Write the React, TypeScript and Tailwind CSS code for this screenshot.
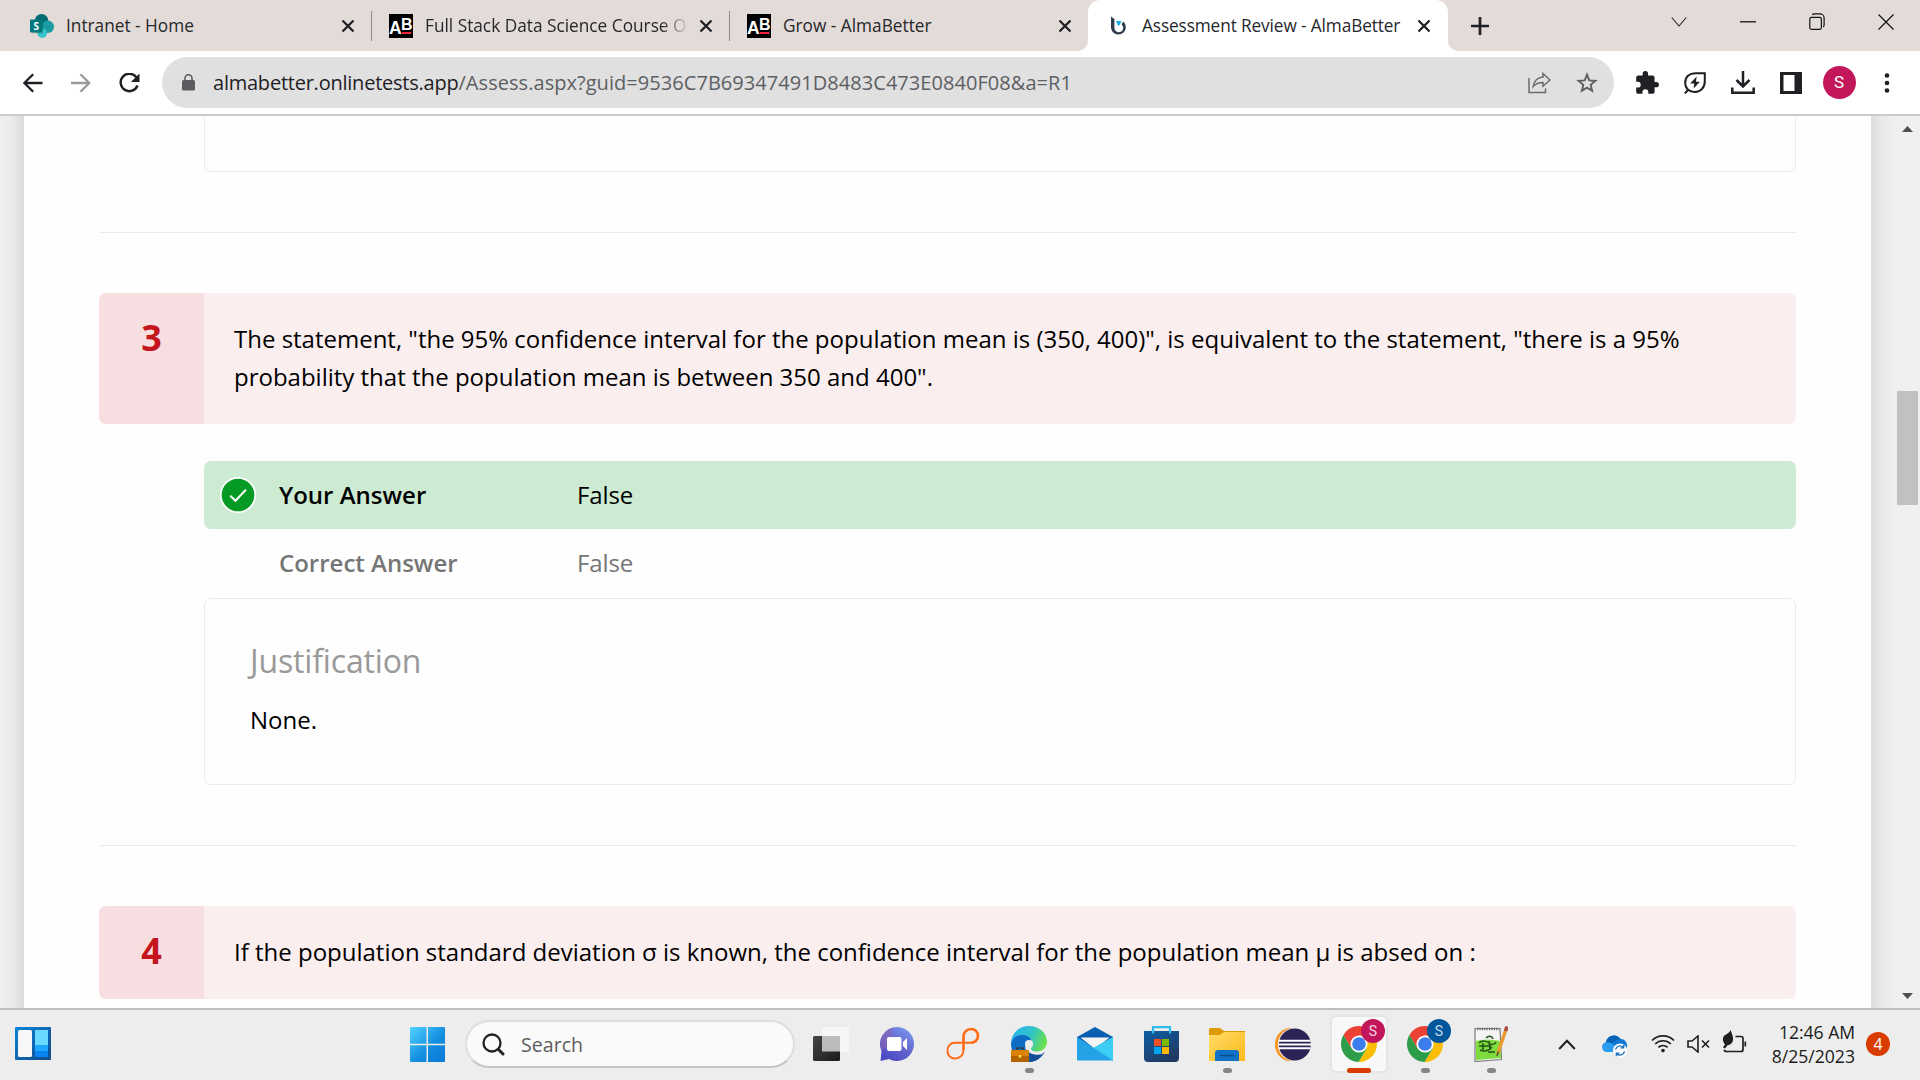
import React from 'react';

type Kids = { children?: React.ReactNode };

/* ---------- Browser tab strip ---------- */

function CloseX() {
  return (
    <svg width="14" height="14" viewBox="0 0 14 14" className="shrink-0">
      <path d="M1.5 1.5 12.5 12.5M12.5 1.5 1.5 12.5" stroke="#1f2024" strokeWidth="2.3" fill="none" />
    </svg>
  );
}

function SharePointIcon() {
  return (
    <svg width="24" height="24" viewBox="0 0 24 24">
      <circle cx="11.5" cy="6.8" r="6.8" fill="#036c70" />
      <circle cx="17.8" cy="12.8" r="6.2" fill="#1a9ba1" />
      <circle cx="12.2" cy="19.2" r="4.8" fill="#37c6d0" />
      <rect x="2" y="6.4" width="11" height="13" fill="#000" opacity=".18" />
      <rect x="0" y="5.5" width="12.4" height="13" rx="1" fill="#03787c" />
      <text x="6.2" y="15.6" textAnchor="middle" fontFamily="Open Sans" fontWeight="700" fontSize="10" fill="#fff">S</text>
    </svg>
  );
}

function ABIcon() {
  return (
    <svg width="24" height="24" viewBox="0 0 24 24">
      <rect width="24" height="24" fill="#000" />
      <text x="0" y="20" fontFamily="Liberation Sans" fontWeight="700" fontSize="17.5" fill="#fff">A</text>
      <text x="12" y="16" fontFamily="Liberation Sans" fontWeight="700" fontSize="16" fill="#fff">B</text>
      <rect x="12.8" y="18" width="9.5" height="2" fill="#f0263c" />
    </svg>
  );
}

function BIcon() {
  return (
    <svg width="18" height="20" viewBox="0 0 18 20">
      <path d="M1 0.5 4.4 3v8.6a4.4 4.4 0 1 0 7.2-3.2l1.6-2.8A7.4 7.4 0 1 1 1 11.6z" fill="#2f3e4e" />
      <path d="M6 5h5.5L9.4 9.6H8z" fill="#17aee8" />
    </svg>
  );
}

function TabTitle({ children }: Kids) {
  return <span className="whitespace-nowrap text-[17.25px] leading-6 text-[#26272b]">{children}</span>;
}

function TabStrip() {
  return (
    <div className="flex h-[51px] bg-[#e3dbd8]">
      <div className="flex w-[372px] items-center pl-[30px]">
        <SharePointIcon />
        <div className="ml-3 w-[275px]"><TabTitle>Intranet - Home</TabTitle></div>
        <CloseX />
        <div className="ml-auto h-[30px] w-px bg-[#8f8b8a]" />
      </div>
      <div className="flex w-[358px] items-center pl-[17px]">
        <ABIcon />
        <div className="ml-3 w-[262px] [mask-image:linear-gradient(to_right,#000_236px,transparent_264px)]">
          <TabTitle>Full Stack Data Science Course O</TabTitle>
        </div>
        <div className="ml-[12px] flex"><CloseX /></div>
        <div className="ml-auto h-[30px] w-px bg-[#8f8b8a]" />
      </div>
      <div className="flex w-[358px] items-center pl-[17px]">
        <ABIcon />
        <div className="ml-3 w-[275px]"><TabTitle>Grow - AlmaBetter</TabTitle></div>
        <CloseX />
      </div>
      <div className="relative flex w-[360px] items-center rounded-t-[12px] bg-white pl-[22px]">
        <svg className="absolute -left-[10px] bottom-0" width="10" height="10" viewBox="0 0 10 10"><path d="M10 0v10H0A10 10 0 0 0 10 0z" fill="#fff" /></svg>
        <svg className="absolute -right-[10px] bottom-0" width="10" height="10" viewBox="0 0 10 10"><path d="M0 0v10h10A10 10 0 0 1 0 0z" fill="#fff" /></svg>
        <BIcon />
        <div className="ml-[14px] w-[275px] tracking-[-0.12px]"><TabTitle>Assessment Review - AlmaBetter</TabTitle></div>
        <CloseX />
      </div>
      <div className="flex w-[64px] items-center justify-center">
        <svg width="18" height="18" viewBox="0 0 18 18"><path d="M9 0v18M0 9h18" stroke="#1f2024" strokeWidth="2.7" /></svg>
      </div>
      <div className="ml-auto flex h-[43px] items-center">
        <div className="flex w-[69px] justify-center"><svg width="16" height="10" viewBox="0 0 16 10"><path d="M.7.5 8 9 15.3.5" fill="none" stroke="#222" strokeWidth="1.1" /></svg></div>
        <div className="flex w-[69px] justify-center"><svg width="16" height="2" viewBox="0 0 16 2"><path d="M0 .8h16" stroke="#111" strokeWidth="1.3" /></svg></div>
        <div className="flex w-[69px] justify-center">
          <svg width="16" height="18" viewBox="0 0 16 18" fill="none" stroke="#111" strokeWidth="1.2">
            <rect x=".8" y="4.400" width="11.6" height="12" rx="1.8" />
            <path d="M3.4 1.900c.4-.7 1-1 2-1h5.700a4 4 0 0 1 4 4v7c0 1-.4 1.700-1 2" />
          </svg>
        </div>
        <div className="flex w-[69px] justify-center"><svg width="16" height="16" viewBox="0 0 16 16"><path d="M.5.5l15 15M15.500.5l-15 15" stroke="#111" strokeWidth="1.2" /></svg></div>
      </div>
    </div>
  );
}

/* ---------- Address bar ---------- */

function Slot({ children }: Kids) {
  return <div className="flex w-12 shrink-0 items-center justify-center">{children}</div>;
}

function Toolbar() {
  return (
    <div className="flex h-[65px] items-center border-b-2 border-[#cbcbcb] bg-white pl-[9px]">
      <Slot>
        <svg width="20" height="20" viewBox="0 0 20 20" fill="none" stroke="#1f2024" strokeWidth="2.3"><path d="M19.500 10H1.500M10.200 1.200 1.400 10l8.800 8.800" /></svg>
      </Slot>
      <Slot>
        <svg width="20" height="20" viewBox="0 0 20 20" fill="none" stroke="#9b9b9c" strokeWidth="2.300"><path d="M0 10h18.200M9.500 1.200 18.300 10l-8.800 8.800" /></svg>
      </Slot>
      <Slot>
        <svg width="22" height="20" viewBox="0 0 22 20">
          <path d="M18.300 4.200A8.700 8.700 0 1 0 19.500 12.500" fill="none" stroke="#1f2024" strokeWidth="2.400" />
          <path d="M21.500.5v8.600h-8.600z" fill="#1f2024" />
        </svg>
      </Slot>
      <div className="ml-[9px] flex h-[51px] w-[1452px] items-center rounded-full bg-[#e0e0e0] pr-[3px] pl-[20px]">
        <svg width="13" height="17" viewBox="0 0 13 17">
          <rect y="6" width="13" height="10.500" rx="1.500" fill="#5a5c60" />
          <path d="M3 7V4.300a3.500 3.500 0 0 1 7 0V7" fill="none" stroke="#5a5c60" strokeWidth="1.600" />
        </svg>
        <div className="ml-[18px] whitespace-nowrap text-[20px] leading-7 text-[#5d5f63]">
          <span className="tracking-[-0.23px] text-[#1f2024]">almabetter.onlinetests.app</span>
          <span className="tracking-[0.05px]">/Assess.aspx?guid=9536C7B69347491D8483C473E0840F08&amp;a=R1</span>
        </div>
        <div className="ml-auto flex">
          <Slot>
            <svg width="24" height="22" viewBox="0 0 24 22" fill="none" stroke="#6a6b6e" strokeWidth="1.500">
              <path d="M2 6v14.500h16.500V16.500" />
              <path d="M16 1.500 23 8l-7 6.200v-3.600c-4 0-7.200 1-9.800 4C7 9 10.500 5.600 16 5.100z" />
            </svg>
          </Slot>
          <Slot>
            <svg width="22" height="22" viewBox="0 0 22 22" fill="none" stroke="#5d5f63" strokeWidth="1.900">
              <path d="M11 2.700l2.250 5.700 6.150.45-4.700 4 1.450 6L11 15.700l-5.150 3.150 1.450-6-4.700-4 6.150-.45z" />
            </svg>
          </Slot>
        </div>
      </div>
      <div className="ml-[9px] flex">
        <Slot>
          <svg width="26" height="26" viewBox="0 0 24 24" fill="#1f2024">
            <path d="M20.500 11H19V7c0-1.100-.9-2-2-2h-4V3.500a2.500 2.500 0 0 0-5 0V5H4c-1.100 0-2 .9-2 2v3.800h1.500a2.700 2.700 0 0 1 0 5.400H2V20c0 1.100.9 2 2 2h3.800v-1.500a2.700 2.700 0 0 1 5.400 0V22H17c1.100 0 2-.9 2-2v-4h1.500a2.500 2.500 0 0 0 0-5z" />
          </svg>
        </Slot>
        <Slot>
          <svg width="22" height="22" viewBox="0 0 22 22" fill="none" stroke="#1f2024">
            <path d="M20.800 1.200H12C5 1.200 1.200 5 1.200 11c0 5.500 4 9 9 9 6 0 10.600-4 10.600-10.500z" strokeWidth="2" />
            <path d="M4.500 17.500.8 21.500" strokeWidth="2" />
            <path d="M12.600 4.600 6.200 11.500h4L9.600 16.600 16 9.700h-4z" fill="#1f2024" stroke="none" />
          </svg>
        </Slot>
        <Slot>
          <svg width="24" height="24" viewBox="0 0 24 24" fill="none" stroke="#1f2024" strokeWidth="2.500">
            <path d="M12 0v15M5.500 9l6.500 6.500L18.500 9M1.300 16.500v5.200h21.400v-5.200" />
          </svg>
        </Slot>
        <Slot>
          <svg width="22" height="22" viewBox="0 0 22 22"><path fillRule="evenodd" d="M0 0h22v22H0zM3.500 3v16h11V3z" fill="#1f2024" /></svg>
        </Slot>
        <Slot>
          <div className="flex size-[33px] items-center justify-center rounded-full bg-[#c2185b] font-['Roboto'] text-[17px] text-white">S</div>
        </Slot>
        <Slot>
          <svg width="6" height="20" viewBox="0 0 6 20" fill="#1f2024"><circle cx="3" cy="2.500" r="2.300" /><circle cx="3" cy="10" r="2.300" /><circle cx="3" cy="17.500" r="2.300" /></svg>
        </Slot>
      </div>
    </div>
  );
}

/* ---------- Page ---------- */

function Question({ n, children }: Kids & { n: number }) {
  return (
    <div className="flex overflow-hidden rounded-[7px] bg-[#faeeee]">
      <div className="w-[105px] shrink-0 bg-[#f6dee1] pt-[26px] text-center text-[36px] leading-[38px] font-bold text-[#c4161c]">{n}</div>
      <div className="pt-[27px] pb-7 pl-[30px] text-[24px] leading-[38px] tracking-[-0.005px] text-black">{children}</div>
    </div>
  );
}

function Review() {
  return (
    <div className="flex h-[892px] overflow-hidden bg-[#f0f0f0]">
      <div className="w-6 shrink-0 bg-gradient-to-r from-[#efefef] via-[#eaeaea] to-[#dcdcdc]" />
      <div className="w-[1847px] shrink-0 bg-[#fefefe] pr-[75px] pl-[75px]">
        <div className="ml-[105px] h-[56px] rounded-b-[7px] border border-t-0 border-[#ebebeb]" />
        <div className="mt-[60px] h-px bg-[#ebebeb]" />
        <div className="mt-[60px] h-[131px]">
          <Question n={3}>
            The statement, "the 95% confidence interval for the population mean is (350, 400)", is equivalent to the statement, "there is a 95%
            <br />
            probability that the population mean is between 350 and 400".
          </Question>
        </div>
        <div className="mt-[37px] ml-[105px]">
          <div className="flex h-[68px] items-center rounded-[7px] bg-[#cdebd3] pl-[16px] text-[24px] leading-[38px] text-black">
            <svg width="36" height="36" viewBox="0 0 37 37" className="mb-px">
              <circle cx="18.500" cy="18.500" r="18.500" fill="#fff" />
              <circle cx="18.500" cy="18.500" r="16.800" fill="#049a24" />
              <path d="M10.500 19.200 15.900 24.400 26.700 13" fill="none" stroke="#fff" strokeWidth="2.100" />
            </svg>
            <div className="ml-[23px] w-[298px] font-semibold">Your Answer</div>
            <div className="tracking-[-0.1px]">False</div>
          </div>
          <div className="flex h-[69px] items-center pb-px pl-[75px] text-[24px] leading-[38px] text-[#757575]">
            <div className="w-[298px] font-semibold">Correct Answer</div>
            <div className="tracking-[-0.1px]">False</div>
          </div>
          <div className="h-[187px] rounded-[7px] border border-[#ebebeb] px-[45px] pt-[40px]">
            <div className="text-[32px] leading-[44px] tracking-[-0.15px] text-[#999999]">Justification</div>
            <div className="mt-[18px] text-[24px] leading-[38px] text-black">None.</div>
          </div>
        </div>
        <div className="mt-[60px] h-px bg-[#ebebeb]" />
        <div className="mt-[60px]">
          <Question n={4}>
            If the population standard deviation σ is known, the confidence interval for the population mean μ is absed on :
          </Question>
        </div>
      </div>
      <div className="w-6 shrink-0 bg-gradient-to-r from-[#dedede] via-[#eaeaea] to-[#efefef]" />
      <div className="flex w-[25px] flex-col items-center bg-[#f0f0f0]">
        <svg className="mt-[10px] ml-[-1px]" width="11" height="6" viewBox="0 0 11 6"><path d="M0 6 5.500 0 11 6z" fill="#505050" /></svg>
        <div className="mt-[259px] ml-[-1px] h-[114px] w-[21px] bg-[#c1c1c1]" />
        <svg className="mt-auto mb-[9px] ml-[-1px]" width="11" height="6" viewBox="0 0 11 6"><path d="M0 0h11L5.500 6z" fill="#505050" /></svg>
      </div>
    </div>
  );
}

/* ---------- Taskbar ---------- */

function TaskApp({ children, dot }: Kids & { dot?: boolean }) {
  return (
    <div className="relative flex h-full w-[66px] items-center justify-center">
      {children}
      {dot && <div className="absolute bottom-[6px] h-[5px] w-[9px] rounded-full bg-[#868686]" />}
    </div>
  );
}

function ChromeLogo({ badge, ink }: { badge: string; ink: string }) {
  return (
    <svg width="44" height="48" viewBox="0 0 44 48" className="shrink-0 overflow-visible">
      <path d="M22 15.500h15.800A18 18 0 0 1 21.500 42L29.800 28.500z" fill="#fbbc04" />
      <path d="M6.400 15 14.400 28.400 22 15.500H37.900A18 18 0 0 0 6.400 15z" fill="#ea4335" />
      <path d="M6.400 15A18 18 0 0 0 21.500 42l8.300-13.700H14.400z" fill="#2d9d4a" />
      <circle cx="22" cy="24" r="8.600" fill="#fff" />
      <circle cx="22" cy="24" r="6.800" fill="#3b7ded" />
      <circle cx="36" cy="11" r="12" fill={badge} />
      <text x="36" y="16" textAnchor="middle" fontFamily="Roboto" fontSize="14" fill={ink}>S</text>
    </svg>
  );
}

function Taskbar() {
  return (
    <div className="flex h-[72px] items-center border-t-2 border-[#bdbdbd] bg-[#ededed] pl-[15px]">
      <svg width="36" height="33" viewBox="0 0 36 33" className="mb-1">
        <defs>
          <linearGradient id="wg" x1="0" y1="0" x2="1" y2="1"><stop stopColor="#0a86d8" /><stop offset="1" stopColor="#124a8c" /></linearGradient>
        </defs>
        <rect width="36" height="33" rx="1" fill="url(#wg)" />
        <rect x="3" y="3" width="14" height="27" rx="1.500" fill="#f7f7f7" />
        <path d="M20 3h13v15H20z" fill="#69d9ff" />
        <path d="M20 18h13v6H20z" fill="#1fa7ff" />
        <path d="M20 24h13v6H20z" fill="#0a84ee" />
      </svg>
      <svg width="35" height="35" viewBox="0 0 35 35" className="mb-0.5 ml-[359px]">
        <defs>
          <linearGradient id="win" x1="0" y1="0" x2="1" y2="1"><stop stopColor="#51d3ff" /><stop offset=".55" stopColor="#1590e0" /><stop offset="1" stopColor="#0577d4" /></linearGradient>
        </defs>
        <path d="M1 0h15.500v16.700H0V1zM18 0h16a1 1 0 0 1 1 1v15.700H18zM0 18.300h16.500V35H1a1 1 0 0 1-1-1zM18 18.300h17V34a1 1 0 0 1-1 1H18z" fill="url(#win)" />
      </svg>
      <div className="mb-0.5 ml-5 flex h-12 w-[330px] items-center rounded-full border-2 border-[#dedede] border-b-[#c6c6c6] bg-[#fafafa] pl-[15px]">
        <svg width="23" height="23" viewBox="0 0 23 23" fill="none" stroke="#222" strokeLinecap="round">
          <circle cx="10" cy="10" r="8.500" strokeWidth="2.300" /><path d="M16.300 16.300 21 21" strokeWidth="3" />
        </svg>
        <span className="mt-px ml-[16px] text-[19.600px] leading-6 text-[#5e5e5e]">Search</span>
      </div>
      <div className="mb-0.5 ml-[3px] flex h-full items-center">
        <TaskApp>
          <svg width="36" height="34" viewBox="0 0 36 34">
            <defs><linearGradient id="tv" x1="0" y1="0" x2="1" y2="1"><stop stopColor="#454545" /><stop offset="1" stopColor="#1b1b1b" /></linearGradient></defs>
            <rect x="9" width="27" height="25" rx="1" fill="#f6f6f6" />
            <rect y="9" width="27" height="25" rx="1.500" fill="url(#tv)" />
            <rect x="9" y="9" width="18" height="15.500" fill="#bcbcbc" />
          </svg>
        </TaskApp>
        <TaskApp>
          <svg width="34" height="34" viewBox="0 0 34 34">
            <defs><linearGradient id="ch" x1="1" y1="0" x2=".4" y2="1"><stop stopColor="#7ba0f2" /><stop offset=".6" stopColor="#6465ce" /><stop offset="1" stopColor="#4d4cc4" /></linearGradient></defs>
            <path d="M17 0a17 17 0 1 1-8 32L.5 34l1-10A17 17 0 0 1 17 0z" fill="url(#ch)" />
            <path d="M0.500 17A17 17 0 0 1 13 .5L9 20 1.500 23z" fill="#8a68b4" opacity=".6" />
            <rect x="7" y="10" width="14.500" height="14" rx="2" fill="#fff" />
            <path d="M23 15l4-4v12l-4-4z" fill="#fff" />
          </svg>
        </TaskApp>
        <TaskApp>
          <svg width="34" height="34" viewBox="0 0 34 34" fill="none" stroke="#ff6a13">
            <path d="M17.500 23V9.500A7.500 7.500 0 0 1 25 2a6.800 6.800 0 0 1 7 6.800 7 7 0 0 1-7 7" strokeWidth="2.600" />
            <path d="M25 15.800H9a7.300 7.300 0 0 0-7.500 7.500A7.300 7.300 0 0 0 9 31.500c5 0 8.500-3.500 8.500-8.500" strokeWidth="1.900" />
          </svg>
        </TaskApp>
        <TaskApp dot>
          <svg width="36" height="36" viewBox="0 0 36 36">
            <defs>
              <linearGradient id="ed" x1="0" y1=".2" x2="1" y2=".5"><stop stopColor="#2ab4ee" /><stop offset=".55" stopColor="#2fc3c9" /><stop offset="1" stopColor="#6ae04b" /></linearGradient>
            </defs>
            <path d="M0 18C0 7 8 0 18 0s18 7 18 15.500c0 6-4.500 10-10 10-4.500 0-6-1.500-6-3 0-1 1.500-1.800 1.500-5 0-5-4.500-7.500-9.500-7.500C6 10 1 13 0 18z" fill="url(#ed)" />
            <path d="M0 18C1 12 6 8.500 12 9c5 .4 8.500 3.500 8.500 6-5.500-1-8 5-5 10 3.500 5 11 5.500 18 1-3 6-9 10-15.500 10C8 36 0 28 0 18z" fill="#0f6cc4" />
            <path d="M15.500 24c4 5 11 5.500 18 2-3 6-9 10-15.500 10z" fill="#124f96" />
            <circle cx="18" cy="18" r="4" fill="#ededed" />
            <path d="M15 22c3 5 11 6.500 18.500 3.500l-2 2.500c-5 1.500-11.500.5-14-3z" fill="#ededed" />
            <rect y="24" width="18" height="12" fill="#b36400" />
            <rect y="24" width="18" height="6" fill="#d98200" />
            <path d="M6 24v-2h6v2" fill="none" stroke="#3a2a10" strokeWidth="1.200" />
            <rect x="7.700" y="29" width="2.600" height="2.600" fill="#ffe14d" />
          </svg>
        </TaskApp>
        <TaskApp>
          <svg width="36" height="34" viewBox="0 0 36 34">
            <path d="M0 10 18 0l18 10v10H0z" fill="#0a60b0" />
            <path d="M3.500 10.500h29L18 22z" fill="#f4f4f4" />
            <path d="M36 10v24L16 21z" fill="#3ccdf5" />
            <path d="M0 10 36 33.500H1a1 1 0 0 1-1-1z" fill="#23a3e6" />
          </svg>
        </TaskApp>
        <TaskApp>
          <svg width="35" height="36" viewBox="0 0 35 36">
            <defs><linearGradient id="st" x1="0" y1="0" x2=".6" y2="1"><stop stopColor="#0c5fa6" /><stop offset="1" stopColor="#213a63" /></linearGradient></defs>
            <path d="M0 5h35v27a4 4 0 0 1-4 4H4a4 4 0 0 1-4-4z" fill="url(#st)" />
            <path d="M9 7.500V1.200h17v6.300" fill="none" stroke="#2fbdf0" strokeWidth="2.200" />
            <rect x="10" y="13" width="7" height="7" fill="#f25022" /><rect x="18" y="13" width="7" height="7" fill="#7fba00" />
            <rect x="10" y="21" width="7" height="7" fill="#00a4ef" /><rect x="18" y="21" width="7" height="7" fill="#ffb900" />
          </svg>
        </TaskApp>
        <TaskApp dot>
          <svg width="36" height="33" viewBox="0 0 36 33">
            <defs><linearGradient id="fo" x1="0" y1="0" x2="1" y2="1"><stop stopColor="#ffdc6b" /><stop offset="1" stopColor="#fbb917" /></linearGradient></defs>
            <path d="M0 1.500A1.500 1.500 0 0 1 1.500 0H11l4 3h21v8H0z" fill="#dc9a06" />
            <path d="M0 7h11l4-3h20a1 1 0 0 1 1 1v28H0z" fill="url(#fo)" />
            <path d="M6 33v-8a3 3 0 0 1 3-3h18a3 3 0 0 1 3 3v8z" fill="#0f72c6" />
            <path d="M11 27.500h14" stroke="#0a4c8c" strokeWidth="1.600" />
          </svg>
        </TaskApp>
        <TaskApp>
          <svg width="36" height="33" viewBox="0 0 36 33">
            <ellipse cx="15.500" cy="16.500" rx="15.500" ry="16.500" fill="#f7941e" />
            <ellipse cx="19.200" cy="16.500" rx="16.500" ry="16.500" fill="#ededed" />
            <circle cx="19.800" cy="16.500" r="16" fill="#2c2255" />
            <path d="M4 12.700h31.500M3.800 16.500H36M4 20.300h31.500" stroke="#fff" strokeWidth="2" />
          </svg>
        </TaskApp>
        <TaskApp>
          <div className="relative flex h-[58px] w-[58px] items-center justify-center rounded-md border-2 border-[#e5e5e5] bg-[#f8f8f8]">
            <ChromeLogo badge="#c2185b" ink="#f3d3e0" />
            <div className="absolute -bottom-0.5 h-[5px] w-6 rounded-full bg-[#da3b01]" />
          </div>
        </TaskApp>
        <TaskApp dot><ChromeLogo badge="#01579b" ink="#c9dcec" /></TaskApp>
        <TaskApp dot>
          <svg width="34" height="36" viewBox="0 0 34 36">
            <path d="M1 2.500h25l1.500 31L1 35.500z" fill="#f4f4f4" stroke="#7b7b7b" strokeWidth="1.200" />
            <path d="M2 15c8-2 16-1 24.500 0l.5 17-25 2z" fill="#7fdc3e" />
            <path d="M3 3h22" stroke="#666" strokeWidth="2.600" strokeDasharray="1.200 1.200" />
            <path d="M5 17c3-3 8-2 10 0s6 2 7-1M6 24c4 2 9 1 12-3M9 17v7M15 15l1 9M12 12c3-3 6-2 7 1M5 20h12M14 26h7" stroke="#24521a" strokeWidth="1.500" fill="none" />
            <path d="M32.500 2 24 27" stroke="#eb9b2d" strokeWidth="3.400" />
            <path d="M33 .5 31.500 5" stroke="#b04b42" strokeWidth="3.400" />
            <path d="M24.500 25.500 22.800 30" stroke="#6a5030" strokeWidth="1.600" />
          </svg>
        </TaskApp>
      </div>
      <div className="mb-0.5 ml-[34px] flex items-center">
        <svg width="18" height="11" viewBox="0 0 18 11" fill="none" stroke="#1f1f1f" strokeWidth="2"><path d="M1.200 10 9 1.800 16.800 10" /></svg>
        <svg width="26" height="24" viewBox="0 0 26 24" className="mt-1 ml-[26px]">
          <path d="M5 18a5 5 0 0 1-1-9.800A8 8 0 0 1 18.500 5 6.500 6.500 0 0 1 22 17z" fill="#0f78d4" />
          <path d="M5 18a5 5 0 0 1-1-9.800c4-.8 6 .8 8 2.800l6 7z" fill="#2a9df0" />
          <path d="M4 8.200A8 8 0 0 1 18.500 5C14 5 12 8 10 9.500 8 8.300 6 8 4 8.200z" fill="#0862b5" />
          <circle cx="18" cy="16.500" r="7" fill="#fff" />
          <path d="M13.500 15.500a4.600 4.600 0 0 1 8-2M22.500 17.500a4.600 4.600 0 0 1-8 2M21.700 10.700v3.200h-3.200M14.300 22.300v-3.200h3.200" fill="none" stroke="#1a72c0" strokeWidth="1.300" />
        </svg>
        <svg width="24" height="20" viewBox="0 0 24 20" fill="none" stroke="#1f1f1f" strokeWidth="1.700" className="mb-0.5 ml-[23px]">
          <path d="M1 7.500a15.600 15.600 0 0 1 22 0M4.200 11a11 11 0 0 1 15.600 0M7.400 14.400a6.500 6.500 0 0 1 9.200 0" />
          <circle cx="12" cy="17.600" r="1.800" fill="#1f1f1f" stroke="none" />
        </svg>
        <svg width="24" height="18" viewBox="0 0 24 18" fill="none" stroke="#1f1f1f" strokeWidth="1.600" className="ml-3">
          <path d="M1 6v6h4l6 5V1L5 6zM15 5.500l7 7M22 5.500l-7 7" />
        </svg>
        <svg width="25" height="24" viewBox="0 0 25 24" fill="none" stroke="#1f1f1f" strokeWidth="1.700" className="mb-1 ml-[11px]">
          <path d="M13.500 6.500H19a2 2 0 0 1 2 2v11a2 2 0 0 1-2 2H5a3 3 0 0 1-3-1.500M23.300 11.500v5" />
          <path d="M8.500 0C9.500 3 11.500 6 11 10c-.4 3.500-3 5-5.200 5L3 18.500 1 17.500l2-3C1 12 0 8.500 2 6 4 4 7 3.500 8.500 0z" fill="#1f1f1f" stroke="none" />
        </svg>
      </div>
      <div className="mb-[3px] ml-auto text-right text-[17.600px] leading-6 whitespace-nowrap text-[#1b1b1b]">
        <div className="tracking-[-0.05px]">12:46 AM</div>
        <div>8/25/2023</div>
      </div>
      <div className="mr-[30px] mb-0.5 ml-[11px] flex size-6 items-center justify-center rounded-full bg-[#da3b01] text-[16px] text-white">4</div>
    </div>
  );
}

export default function App() {
  return (
    <div className="h-[1080px] w-[1920px] overflow-hidden font-['Open_Sans','Noto_Sans',sans-serif]">
      <TabStrip />
      <Toolbar />
      <Review />
      <Taskbar />
    </div>
  );
}
